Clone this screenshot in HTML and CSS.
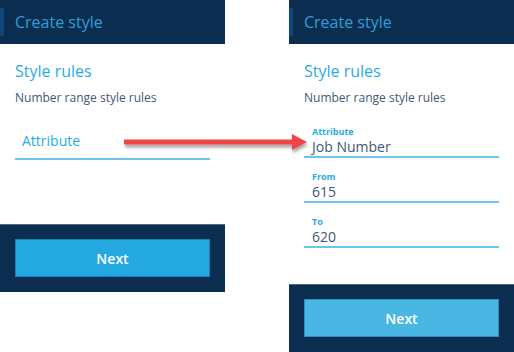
FILE: index.html
```html
<!DOCTYPE html>
<html lang="en">
<head>
    <meta charset="UTF-8">
    <title>Create style</title>
    <link rel="stylesheet" href="styles.css">
</head>
<body>
    <div class="compare">
        <!-- Empty state -->
        <section class="panel panel-short">
            <header class="panel-header">
                <h1>Create style</h1>
            </header>
            <div class="panel-body">
                <h2>Style rules</h2>
                <p class="subtitle">Number range style rules</p>
                <div class="field field-empty">
                    <span class="placeholder">Attribute</span>
                </div>
            </div>
            <footer class="panel-footer">
                <button class="next-button">Next</button>
            </footer>
        </section>

        <!-- Filled state -->
        <section class="panel panel-tall">
            <header class="panel-header">
                <h1>Create style</h1>
            </header>
            <div class="panel-body">
                <h2>Style rules</h2>
                <p class="subtitle">Number range style rules</p>
                <div class="field first-field">
                    <label>Attribute</label>
                    <span class="value">Job Number</span>
                </div>
                <div class="field">
                    <label>From</label>
                    <span class="value">615</span>
                </div>
                <div class="field">
                    <label>To</label>
                    <span class="value">620</span>
                </div>
            </div>
            <footer class="panel-footer">
                <button class="next-button next-hover">Next</button>
            </footer>
        </section>

        <svg class="arrow" width="190" height="24" viewBox="0 0 190 24">
            <defs>
                <filter id="shadow" x="-10%" y="-50%" width="120%" height="220%">
                    <feDropShadow dx="1" dy="3" stdDeviation="1.6" flood-color="#000" flood-opacity="0.35"/>
                </filter>
            </defs>
            <g filter="url(#shadow)">
                <rect x="0" y="9.5" width="170" height="5" fill="#f04444"/>
                <polygon points="168,4 183,12 168,20" fill="#f04444"/>
            </g>
        </svg>
    </div>
</body>
</html>
```

FILE: styles.css
```css
/* Reset */
body, h1, h2, p {
    margin: 0;
    padding: 0;
}

body {
    font-family: "Open Sans", Arial, sans-serif;
    background-color: #fff;
}

.compare {
    position: relative;
    display: flex;
    align-items: flex-start;
    gap: 64px;
}

/* Panel */
.panel {
    width: 225px;
    display: flex;
    flex-direction: column;
}

.panel-short {
    height: 292px;
}

.panel-tall {
    height: 352px;
}

.panel-header {
    background-color: #0b2e50;
    height: 44px;
    display: flex;
    align-items: center;
    position: relative;
}

.panel-header::before {
    content: "";
    position: absolute;
    left: 0;
    top: 8px;
    width: 4px;
    height: 28px;
    background-color: #10467a;
}

.panel-header h1 {
    font-size: 16px;
    font-weight: normal;
    color: #2c9fd9;
    padding-left: 15px;
    line-height: 22px;
}

.panel-body {
    flex: 1;
    padding: 15px 15px 0;
}

.panel-body h2 {
    font-size: 16px;
    font-weight: normal;
    color: #29abe2;
    line-height: 24px;
}

.subtitle {
    margin-top: 6px;
    font-size: 12px;
    line-height: 18px;
    color: #3f5878;
}

/* Fields */
.field {
    display: flex;
    flex-direction: column;
    padding: 0 8px;
    border-bottom: 2px solid #6cc6ec;
    margin-top: 13px;
}

.field-empty {
    margin-top: 23px;
    padding: 0 7px 6px;
}

.first-field {
    margin-top: 19px;
}

.placeholder {
    font-size: 14px;
    line-height: 22px;
    color: #29abe2;
}

.field label {
    font-size: 9px;
    font-weight: bold;
    line-height: 11px;
    color: #29abe2;
}

.field .value {
    font-size: 14px;
    line-height: 19px;
    color: #3f5878;
}

/* Footer */
.panel-footer {
    background-color: #0b2e50;
    border-top: 1px solid #4d6785;
    padding: 14px 15px 15px;
}

.next-button {
    display: block;
    width: 100%;
    height: 38px;
    border: 1px solid #1a7fb5;
    background-color: #24a8e0;
    color: #fff;
    font-family: "Open Sans", Arial, sans-serif;
    font-size: 14px;
    font-weight: 600;
}

.next-hover {
    background-color: #4ab6e4;
    border-color: #2b8fc2;
}

/* Annotation arrow */
.arrow {
    position: absolute;
    left: 124px;
    top: 130px;
}
```
